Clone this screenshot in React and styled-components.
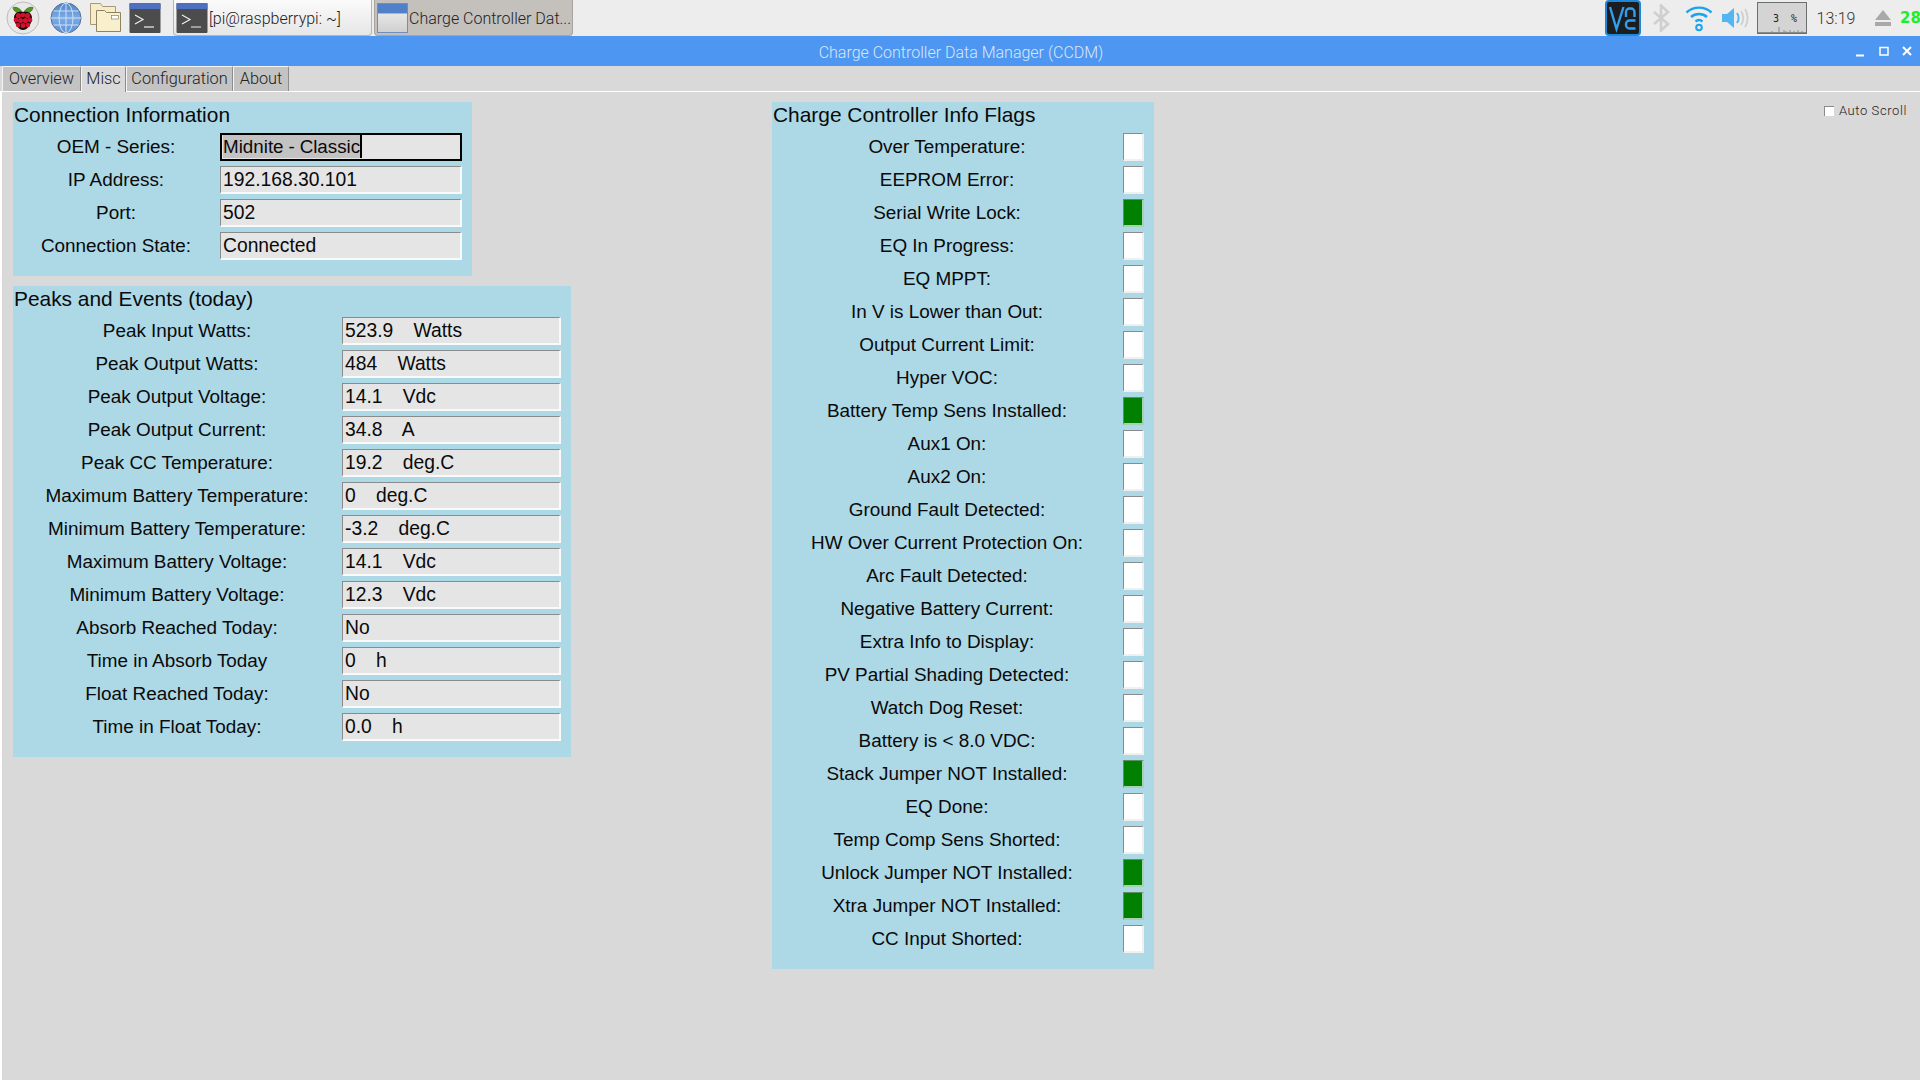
import React from 'react';
import styled, { createGlobalStyle } from 'styled-components';

const Global = createGlobalStyle`
  html, body { margin: 0; padding: 0; height: 100%; background: #d9d9d9; overflow: hidden; }
  #root { height: 100%; }
  * { box-sizing: border-box; }
`;

const Screen = styled.div`
  width: 1920px;
  height: 1080px;
  display: flex;
  flex-direction: column;
  background: #d9d9d9;
  font-family: "Liberation Sans", Arial, sans-serif;
  color: #0a0a0a;
`;

const Taskbar = styled.div`
  height: 36px;
  flex: none;
  display: flex;
  align-items: center;
  background: #ededed;
  font-family: Roboto, sans-serif;
  font-weight: 300;
  padding-left: 4px;
`;

const LaunchIcon = styled.div`
  width: ${p => p.$w}px;
  height: 36px;
  flex: none;
  display: flex;
  align-items: center;
  justify-content: center;
`;

const TaskButton = styled.div`
  width: 199px;
  height: 36px;
  margin-right: 2px;
  margin-top: -1px;
  flex: none;
  display: flex;
  align-items: center;
  gap: 1px;
  padding: 1px 0 0 2px;
  overflow: hidden;
  white-space: nowrap;
  font-size: 16px;
  color: #222;
  border: 1px solid ${p => (p.$active ? '#a8a5a1' : '#b5b5b5')};
  border-top: 0;
  border-radius: 0 0 4px 4px;
  background: ${p => (p.$active ? '#c4c0bc' : 'linear-gradient(#fbfbfb, #e6e6e6)')};
`;

const TaskLabel = styled.span`
  padding-top: 2px;
`;

const Tray = styled.div`
  margin-left: auto;
  display: flex;
  align-items: center;
  height: 36px;
`;

const TrayIcon = styled.div`
  width: ${p => p.$w}px;
  height: 36px;
  flex: none;
  display: flex;
  align-items: center;
  justify-content: center;
`;

const CpuBox = styled.div`
  position: relative;
  width: 50px;
  height: 32px;
  margin-left: 4px;
  background: #d4d4d4;
  border: 1px solid #6e6e6e;
  display: flex;
  align-items: center;
  justify-content: flex-end;
  padding: 0 9px 0 0;
  font-family: "DejaVu Sans Mono", monospace;
  font-size: 10px;
  white-space: pre;
  color: #222;
`;

const CpuGraph = styled.svg`
  position: absolute;
  left: 0;
  bottom: 0;
`;

const Clock = styled.div`
  width: 58px;
  text-align: center;
  font-size: 16px;
  color: #3a3128;
`;

const DriveTemp = styled.div`
  width: 20px;
  overflow: hidden;
  font-family: "DejaVu Sans", sans-serif;
  font-weight: 700;
  font-size: 15px;
  color: #22ee22;
`;

const TitleBar = styled.div`
  height: 30px;
  flex: none;
  position: relative;
  background: #4d97f2;
  color: #dbe6f5;
  display: flex;
  align-items: center;
  justify-content: center;
  font-family: Roboto, sans-serif;
  font-weight: 300;
  font-size: 16px;
  padding: 2px 0 0 2px;
`;

const WindowButtons = styled.div`
  position: absolute;
  right: 5px;
  top: 0;
  height: 30px;
  display: flex;
  align-items: center;
  gap: 7px;
`;

const TabRow = styled.div`
  height: 26px;
  flex: none;
  display: flex;
  padding-left: 2px;
  border-bottom: 1px solid #fff;
  font-family: Roboto, sans-serif;
  font-weight: 300;
  font-size: 16.3px;
`;

const Tab = styled.div`
  width: ${p => p.$w}px;
  height: ${p => (p.$active ? 26 : 25)}px;
  flex: none;
  display: flex;
  align-items: center;
  justify-content: center;
  padding-bottom: 2px;
  color: #222;
  background: ${p => (p.$active ? '#d9d9d9' : '#c3c3c3')};
  border: 1px solid #fff;
  border-color: #f4f4f4 #8c8c8c transparent #f4f4f4;
  border-bottom: 0;
  border-radius: 2px 2px 0 0;
`;

const Page = styled.div`
  flex: 1;
  display: flex;
  align-items: flex-start;
  border-left: 2px solid #fff;
  padding: 10px 10px 0 11px;
`;

const LeftColumn = styled.div`
  width: 558px;
  flex: none;
  display: flex;
  flex-direction: column;
  align-items: flex-start;
  gap: 10px;
`;

const Panel = styled.section`
  width: ${p => p.$w}px;
  height: ${p => p.$h}px;
  background: #add8e6;
  flex: none;
  padding: 0 1px;
`;

const FlagsPanel = styled(Panel)`
  margin-left: 201px;
`;

const PanelTitle = styled.h2`
  margin: 0;
  height: 30px;
  line-height: 26px;
  font-weight: 400;
  font-size: 20.9px;
`;

const Row = styled.div`
  display: grid;
  grid-template-columns: ${p => p.$label}px ${p => p.$field}px;
  height: 33px;
  align-items: start;
  padding-top: 1px;
`;

const Label = styled.div`
  height: 28px;
  line-height: 28px;
  padding-right: 2px;
  font-size: 18.9px;
  text-align: center;
  white-space: nowrap;
`;

const Field = styled.div`
  height: 28px;
  line-height: 25px;
  padding-left: 2px;
  font-size: 19.3px;
  word-spacing: -0.3px;
  white-space: pre;
  background: #e5e5e5;
  border-style: solid;
  border-width: 1px 2px 2px 1px;
  border-color: #8b8b8b #fafafa #fafafa #8b8b8b;
`;

const FocusField = styled(Field)`
  border: 2px solid #000;
  padding-left: 1px;
  line-height: 24px;
  font-size: 18.8px;
`;

const Selection = styled.span`
  background: #c3c3c3;
  display: inline-block;
  height: 23px;
  line-height: 24px;
  border-right: 2px solid #000;
`;

const Flag = styled.div`
  width: 21px;
  height: 28px;
  background: ${p => (p.$on ? '#008000' : '#fff')};
  border-style: solid;
  border-width: 1px 2px 2px 1px;
  border-color: ${p => (p.$on ? '#5f8f5f #a9d0b0 #a9d0b0 #5f8f5f' : '#8b8b8b #f0f0f0 #f0f0f0 #8b8b8b')};
`;

const AutoScroll = styled.label`
  margin-left: auto;
  margin-top: 1px;
  margin-right: 3px;
  display: flex;
  align-items: center;
  gap: 5px;
  font-family: Roboto, sans-serif;
  font-weight: 300;
  font-size: 13px;
  letter-spacing: 0.6px;
  color: #222;
`;

const Check = styled.span`
  width: 10px;
  height: 10px;
  background: #fff;
  border: 1px solid #8b8b8b;
  border-width: 1px 0 0 1px;
`;

const Raspberry = () => (
  <svg width="36" height="36" viewBox="0 0 36 36">
    <circle cx="18" cy="18" r="16" fill="#e8e8e6" stroke="#bdbdbd" />
    <path d="M17.500 13C16 9 12 6.500 8 7.500 8.500 11 12 14 17.500 13zM18.500 13C20 9 24 6.500 28 7.500 27.500 11 24 14 18.500 13z" fill="#4f9a25" stroke="#2a5a12" strokeWidth="0.6" />
    <path d="M18 12c6-1 9 2 9 6 0 3-1 5-3 8-2 3-4 4-6 4s-4-1-6-4c-2-3-3-5-3-8 0-4 3-7 9-6z" fill="#1d0308" />
    <g fill="#d0122f">
      <circle cx="13.500" cy="15.500" r="2.600" />
      <circle cx="22.500" cy="15.500" r="2.600" />
      <circle cx="18" cy="15" r="2.300" />
      <circle cx="11" cy="20" r="2.400" />
      <circle cx="25" cy="20" r="2.400" />
      <circle cx="15.500" cy="20.500" r="2.600" />
      <circle cx="20.500" cy="20.500" r="2.600" />
      <circle cx="13" cy="25" r="2.200" />
      <circle cx="23" cy="25" r="2.200" />
      <circle cx="18" cy="25.500" r="2.500" />
    </g>
  </svg>
);

const Globe = () => (
  <svg width="32" height="32" viewBox="0 0 32 32">
    <defs>
      <linearGradient id="gglobe" x1="0" y1="0" x2="0" y2="1">
        <stop offset="0" stopColor="#4f86cf" />
        <stop offset="0.5" stopColor="#7cabe4" />
        <stop offset="1" stopColor="#5d92d8" />
      </linearGradient>
    </defs>
    <circle cx="16" cy="16" r="15" fill="url(#gglobe)" stroke="#56708f" />
    <g fill="none" stroke="#cfe0f5" strokeWidth="1">
      <ellipse cx="16" cy="16" rx="7" ry="15" />
      <path d="M16 1v30M1 16h30M3.500 9h25M3.500 23h25" />
    </g>
  </svg>
);

const Folder = () => (
  <svg width="31" height="30" viewBox="2.500 2.500 31 30">
    <path d="M3 3h10l2 3h13v18H3z" fill="#f6edc8" stroke="#a89a78" />
    <path d="M9 10h8l2 2h14v19H9z" fill="#f8efcd" stroke="#8f8262" />
    <rect x="24" y="15" width="7" height="3.500" fill="#fff" stroke="#8f8262" strokeWidth="0.7" />
  </svg>
);

const Terminal = ({ size = 32 }) => (
  <svg width={size} height={size} viewBox="0 0 32 32">
    <rect x="0.500" y="1" width="31" height="30" rx="1" fill="#4c4c4c" />
    <path d="M.5 2a1 1 0 0 1 1-1h29a1 1 0 0 1 1 1v5H.5z" fill="#4f6fc0" />
    <path d="M6 13l8 4.500-8 4.500" fill="none" stroke="#eee" strokeWidth="1.200" />
    <path d="M15 25h10" stroke="#eee" strokeWidth="1.200" />
  </svg>
);

const WindowIcon = () => (
  <svg width="31" height="30" viewBox="0 0 31 30">
    <defs>
      <linearGradient id="wgrad" x1="0" y1="0" x2="0" y2="1">
        <stop offset="0" stopColor="#f2f2f2" />
        <stop offset="1" stopColor="#cfcfcf" />
      </linearGradient>
    </defs>
    <rect x="0.500" y="0.500" width="30" height="29" fill="url(#wgrad)" stroke="#6f8dbd" />
    <rect x="1" y="1" width="29" height="9" fill="#5080c8" />
    <path d="M1 10.500h29" stroke="#9cb7e0" />
  </svg>
);

const VncLogo = () => (
  <svg width="36" height="36" viewBox="0 0 36 36">
    <rect x="1" y="1" width="34" height="34" rx="3" fill="#1b1d20" stroke="#1e88d8" strokeWidth="2" />
    <g fill="none" stroke="#2f9fee" strokeWidth="2.400">
      <path d="M5 7l6.500 22L18.500 7" />
      <path d="M21 17v-5a3.500 3.500 0 0 1 3.500-3.500h1.500a3.500 3.500 0 0 1 3.500 3.500v5" />
      <path d="M30.500 20.500h-6a3.500 3.500 0 0 0-3.500 3.500v1a3.500 3.500 0 0 0 3.500 3.500h6" />
    </g>
  </svg>
);

const Bluetooth = () => (
  <svg width="18" height="28" viewBox="0 0 18 28">
    <path d="M2 8l14 12-7 6.500V1.500L16 8 2 20" fill="none" stroke="#cfcfcf" strokeWidth="2.600" />
  </svg>
);

const Wifi = () => (
  <svg width="28" height="28" viewBox="0 0 28 28">
    <g fill="none" stroke="#1aa3f0" strokeWidth="2.400">
      <path d="M1.500 8.500c7-6.500 18-6.500 25 0" />
      <path d="M6 13c4.500-4 11.500-4 16 0" />
      <path d="M10.500 17.500c2-1.600 5-1.600 7 0" />
      <circle cx="14" cy="23.500" r="2.800" strokeWidth="2" />
    </g>
  </svg>
);

const Speaker = () => (
  <svg width="28" height="24" viewBox="0 0 28 24">
    <path d="M1 8h5l7-6v20l-7-6H1z" fill="#55b5f3" />
    <path d="M16 7c2 3 2 7 0 10" fill="none" stroke="#55b5f3" strokeWidth="2" />
    <path d="M20 5c3 4 3 10 0 14M24 3c3.500 5 3.500 13 0 18" fill="none" stroke="#cfcfcf" strokeWidth="1.800" />
  </svg>
);

const Eject = () => (
  <svg width="18" height="18" viewBox="0 0 18 18">
    <path d="M9 1l8 10H1z" fill="#a9a9a9" />
    <rect x="1" y="13" width="16" height="4" fill="#a9a9a9" />
  </svg>
);

const connection = [
  ['IP Address:', '192.168.30.101'],
  ['Port:', '502'],
  ['Connection State:', 'Connected'],
];

const peaks = [
  ['Peak Input Watts:', '523.9    Watts'],
  ['Peak Output Watts:', '484    Watts'],
  ['Peak Output Voltage:', '14.1    Vdc'],
  ['Peak Output Current:', '34.8    A'],
  ['Peak CC Temperature:', '19.2    deg.C'],
  ['Maximum Battery Temperature:', '0    deg.C'],
  ['Minimum Battery Temperature:', '-3.2    deg.C'],
  ['Maximum Battery Voltage:', '14.1    Vdc'],
  ['Minimum Battery Voltage:', '12.3    Vdc'],
  ['Absorb Reached Today:', 'No'],
  ['Time in Absorb Today', '0    h'],
  ['Float Reached Today:', 'No'],
  ['Time in Float Today:', '0.0    h'],
];

const flags = [
  ['Over Temperature:'],
  ['EEPROM Error:'],
  ['Serial Write Lock:', true],
  ['EQ In Progress:'],
  ['EQ MPPT:'],
  ['In V is Lower than Out:'],
  ['Output Current Limit:'],
  ['Hyper VOC:'],
  ['Battery Temp Sens Installed:', true],
  ['Aux1 On:'],
  ['Aux2 On:'],
  ['Ground Fault Detected:'],
  ['HW Over Current Protection On:'],
  ['Arc Fault Detected:'],
  ['Negative Battery Current:'],
  ['Extra Info to Display:'],
  ['PV Partial Shading Detected:'],
  ['Watch Dog Reset:'],
  ['Battery is < 8.0 VDC:'],
  ['Stack Jumper NOT Installed:', true],
  ['EQ Done:'],
  ['Temp Comp Sens Shorted:'],
  ['Unlock Jumper NOT Installed:', true],
  ['Xtra Jumper NOT Installed:', true],
  ['CC Input Shorted:'],
];

const App = () => (
  <Screen>
    <Global />
    <Taskbar>
      <LaunchIcon $w={38}><Raspberry /></LaunchIcon>
      <LaunchIcon $w={48}><Globe /></LaunchIcon>
      <LaunchIcon $w={31}><Folder /></LaunchIcon>
      <LaunchIcon $w={48}><Terminal /></LaunchIcon>
      <LaunchIcon $w={4} />
      <TaskButton><Terminal /><TaskLabel>[pi@raspberrypi: ~]</TaskLabel></TaskButton>
      <TaskButton $active><WindowIcon /><TaskLabel>Charge Controller Dat...</TaskLabel></TaskButton>
      <Tray>
        <VncLogo />
        <TrayIcon $w={40}><Bluetooth /></TrayIcon>
        <TrayIcon $w={36}><Wifi /></TrayIcon>
        <TrayIcon $w={36}><Speaker /></TrayIcon>
        <CpuBox>
          3  %
          <CpuGraph width="48" height="8" viewBox="0 0 48 8">
            <path d="M0 7.500h48M8 7v1M14 6v2M20 7v1M21 2v6M26 5v3M28 6v2M32 5v3M36 6v2M40 5v3M44 6v2" stroke="#8a8a8a" strokeWidth="1" />
          </CpuGraph>
        </CpuBox>
        <Clock>13:19</Clock>
        <TrayIcon $w={35}><Eject /></TrayIcon>
        <DriveTemp>28</DriveTemp>
      </Tray>
    </Taskbar>
    <TitleBar>
      Charge Controller Data Manager (CCDM)
      <WindowButtons>
        <svg width="16" height="16" viewBox="0 0 16 16"><path d="M3 12.500h8" stroke="#fff" strokeWidth="2" /></svg>
        <svg width="16" height="16" viewBox="0 0 16 16"><path d="M4 4.500h8v7.500H4z" fill="none" stroke="#fff" strokeWidth="1.500" /></svg>
        <svg width="16" height="16" viewBox="0 0 16 16"><path d="M4 4l8 8M12 4l-8 8" stroke="#fff" strokeWidth="2" /></svg>
      </WindowButtons>
    </TitleBar>
    <TabRow>
      <Tab $w={79}>Overview</Tab>
      <Tab $w={45} $active>Misc</Tab>
      <Tab $w={107}>Configuration</Tab>
      <Tab $w={56}>About</Tab>
    </TabRow>
    <Page>
      <LeftColumn>
        <Panel $w={459} $h={174}>
          <PanelTitle>Connection Information</PanelTitle>
          <Row $label={206} $field={242}>
            <Label>OEM - Series:</Label>
            <FocusField><Selection>Midnite - Classic</Selection></FocusField>
          </Row>
          {connection.map(([label, value]) => (
            <Row key={label} $label={206} $field={242}>
              <Label>{label}</Label>
              <Field>{value}</Field>
            </Row>
          ))}
        </Panel>
        <Panel $w={558} $h={471}>
          <PanelTitle>Peaks and Events (today)</PanelTitle>
          {peaks.map(([label, value]) => (
            <Row key={label} $label={328} $field={219}>
              <Label>{label}</Label>
              <Field>{value}</Field>
            </Row>
          ))}
        </Panel>
      </LeftColumn>
      <FlagsPanel $w={382} $h={867}>
        <PanelTitle>Charge Controller Info Flags</PanelTitle>
        {flags.map(([label, on]) => (
          <Row key={label} $label={350} $field={21}>
            <Label>{label}</Label>
            <Flag $on={on} />
          </Row>
        ))}
      </FlagsPanel>
      <AutoScroll><Check />Auto Scroll</AutoScroll>
    </Page>
  </Screen>
);

export default App;
